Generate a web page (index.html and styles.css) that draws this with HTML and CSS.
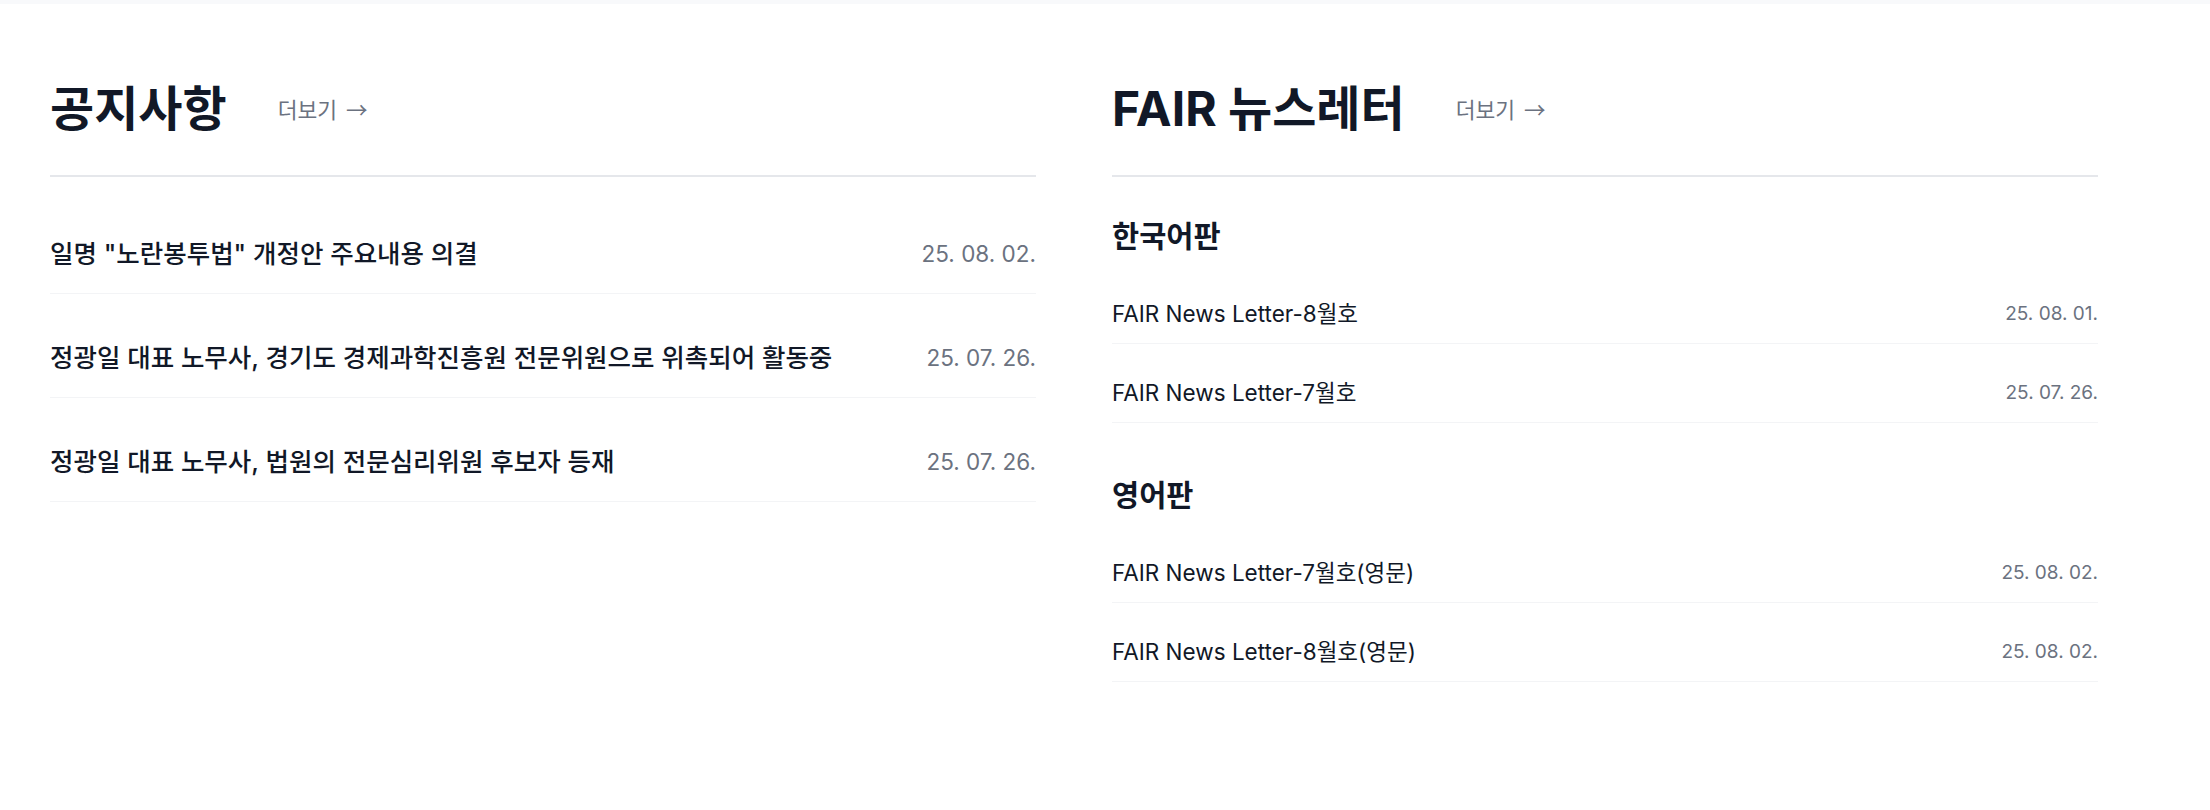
FILE: index.html
```html
<!DOCTYPE html>
<html lang="ko">
<head>
<meta charset="utf-8">
<title>공지사항 · FAIR 뉴스레터</title>
<link rel="stylesheet" href="styles.css">
</head>
<body>
<main class="board">
  <section class="col">
    <header class="col-head">
      <h2 class="col-title">공지사항</h2>
      <a class="more" href="#">더보기 <span class="arrow">→</span></a>
    </header>
    <ul class="list list-notice">
      <li class="row"><a class="row-title" href="#">일명 "노란봉투법" 개정안 주요내용 의결</a><span class="row-date">25. 08. 02.</span></li>
      <li class="row"><a class="row-title" href="#">정광일 대표 노무사, 경기도 경제과학진흥원 전문위원으로 위촉되어 활동중</a><span class="row-date">25. 07. 26.</span></li>
      <li class="row"><a class="row-title" href="#">정광일 대표 노무사, 법원의 전문심리위원 후보자 등재</a><span class="row-date">25. 07. 26.</span></li>
    </ul>
  </section>
  <section class="col">
    <header class="col-head">
      <h2 class="col-title">FAIR 뉴스레터</h2>
      <a class="more" href="#">더보기 <span class="arrow">→</span></a>
    </header>
    <div class="group">
      <h3 class="group-title">한국어판</h3>
      <ul class="list list-news">
        <li class="row"><a class="row-title" href="#">FAIR News Letter-8월호</a><span class="row-date">25. 08. 01.</span></li>
        <li class="row"><a class="row-title" href="#">FAIR News Letter-7월호</a><span class="row-date">25. 07. 26.</span></li>
      </ul>
    </div>
    <div class="group">
      <h3 class="group-title">영어판</h3>
      <ul class="list list-news">
        <li class="row"><a class="row-title" href="#">FAIR News Letter-7월호(영문)</a><span class="row-date">25. 08. 02.</span></li>
        <li class="row"><a class="row-title" href="#">FAIR News Letter-8월호(영문)</a><span class="row-date">25. 08. 02.</span></li>
      </ul>
    </div>
  </section>
</main>
</body>
</html>
```

FILE: styles.css
```css
* { box-sizing: border-box; }
html, body { margin: 0; padding: 0; background: #ffffff; }
body {
  font-family: Inter, "Noto Sans CJK KR", sans-serif;
  color: #111827;
  border-top: 4px solid #f8f9fb;
}
a { text-decoration: none; color: inherit; }
ul { list-style: none; margin: 0; padding: 0; }
h2, h3 { margin: 0; }

.board {
  display: grid;
  grid-template-columns: 986px 986px;
  column-gap: 76px;
  padding: 76px 0 0 50px;
}

.col-head {
  display: flex;
  align-items: center;
  gap: 51px;
  padding-bottom: 37px;
  border-bottom: 2px solid #e5e7eb;
}
.col-title {
  font-size: 48px;
  line-height: 58px;
  font-weight: 700;
  letter-spacing: 0;
  color: #111827;
}
.more {
  font-size: 21.5px;
  line-height: 30px;
  color: #6b7280;
}
.arrow {
  font-family: "Noto Sans CJK KR", sans-serif;
  margin-left: 3px;
}

.row {
  display: flex;
  justify-content: space-between;
  align-items: center;
  border-bottom: 1px solid #f3f4f6;
}
.row-title { color: #111827; }
.row-date { color: #6b7280; }

.list-notice { margin-top: 13px; }
.list-notice .row { padding: 46px 0 21px; }
.list-notice .row-title { font-size: 25.5px; line-height: 36px; font-weight: 500; }
.list-notice .row-date { font-size: 22.5px; line-height: 36px; }

.group-title {
  font-size: 29.5px;
  line-height: 40px;
  font-weight: 700;
  margin-bottom: 9px;
}
.group:first-of-type { margin-top: 39px; }
.group + .group { margin-top: 52px; }
.list-news .row { padding: 33px 0 13px; }
.list-news .row-title { font-size: 22.5px; line-height: 32px; }
.list-news .row-date { font-size: 19px; line-height: 32px; }
```
